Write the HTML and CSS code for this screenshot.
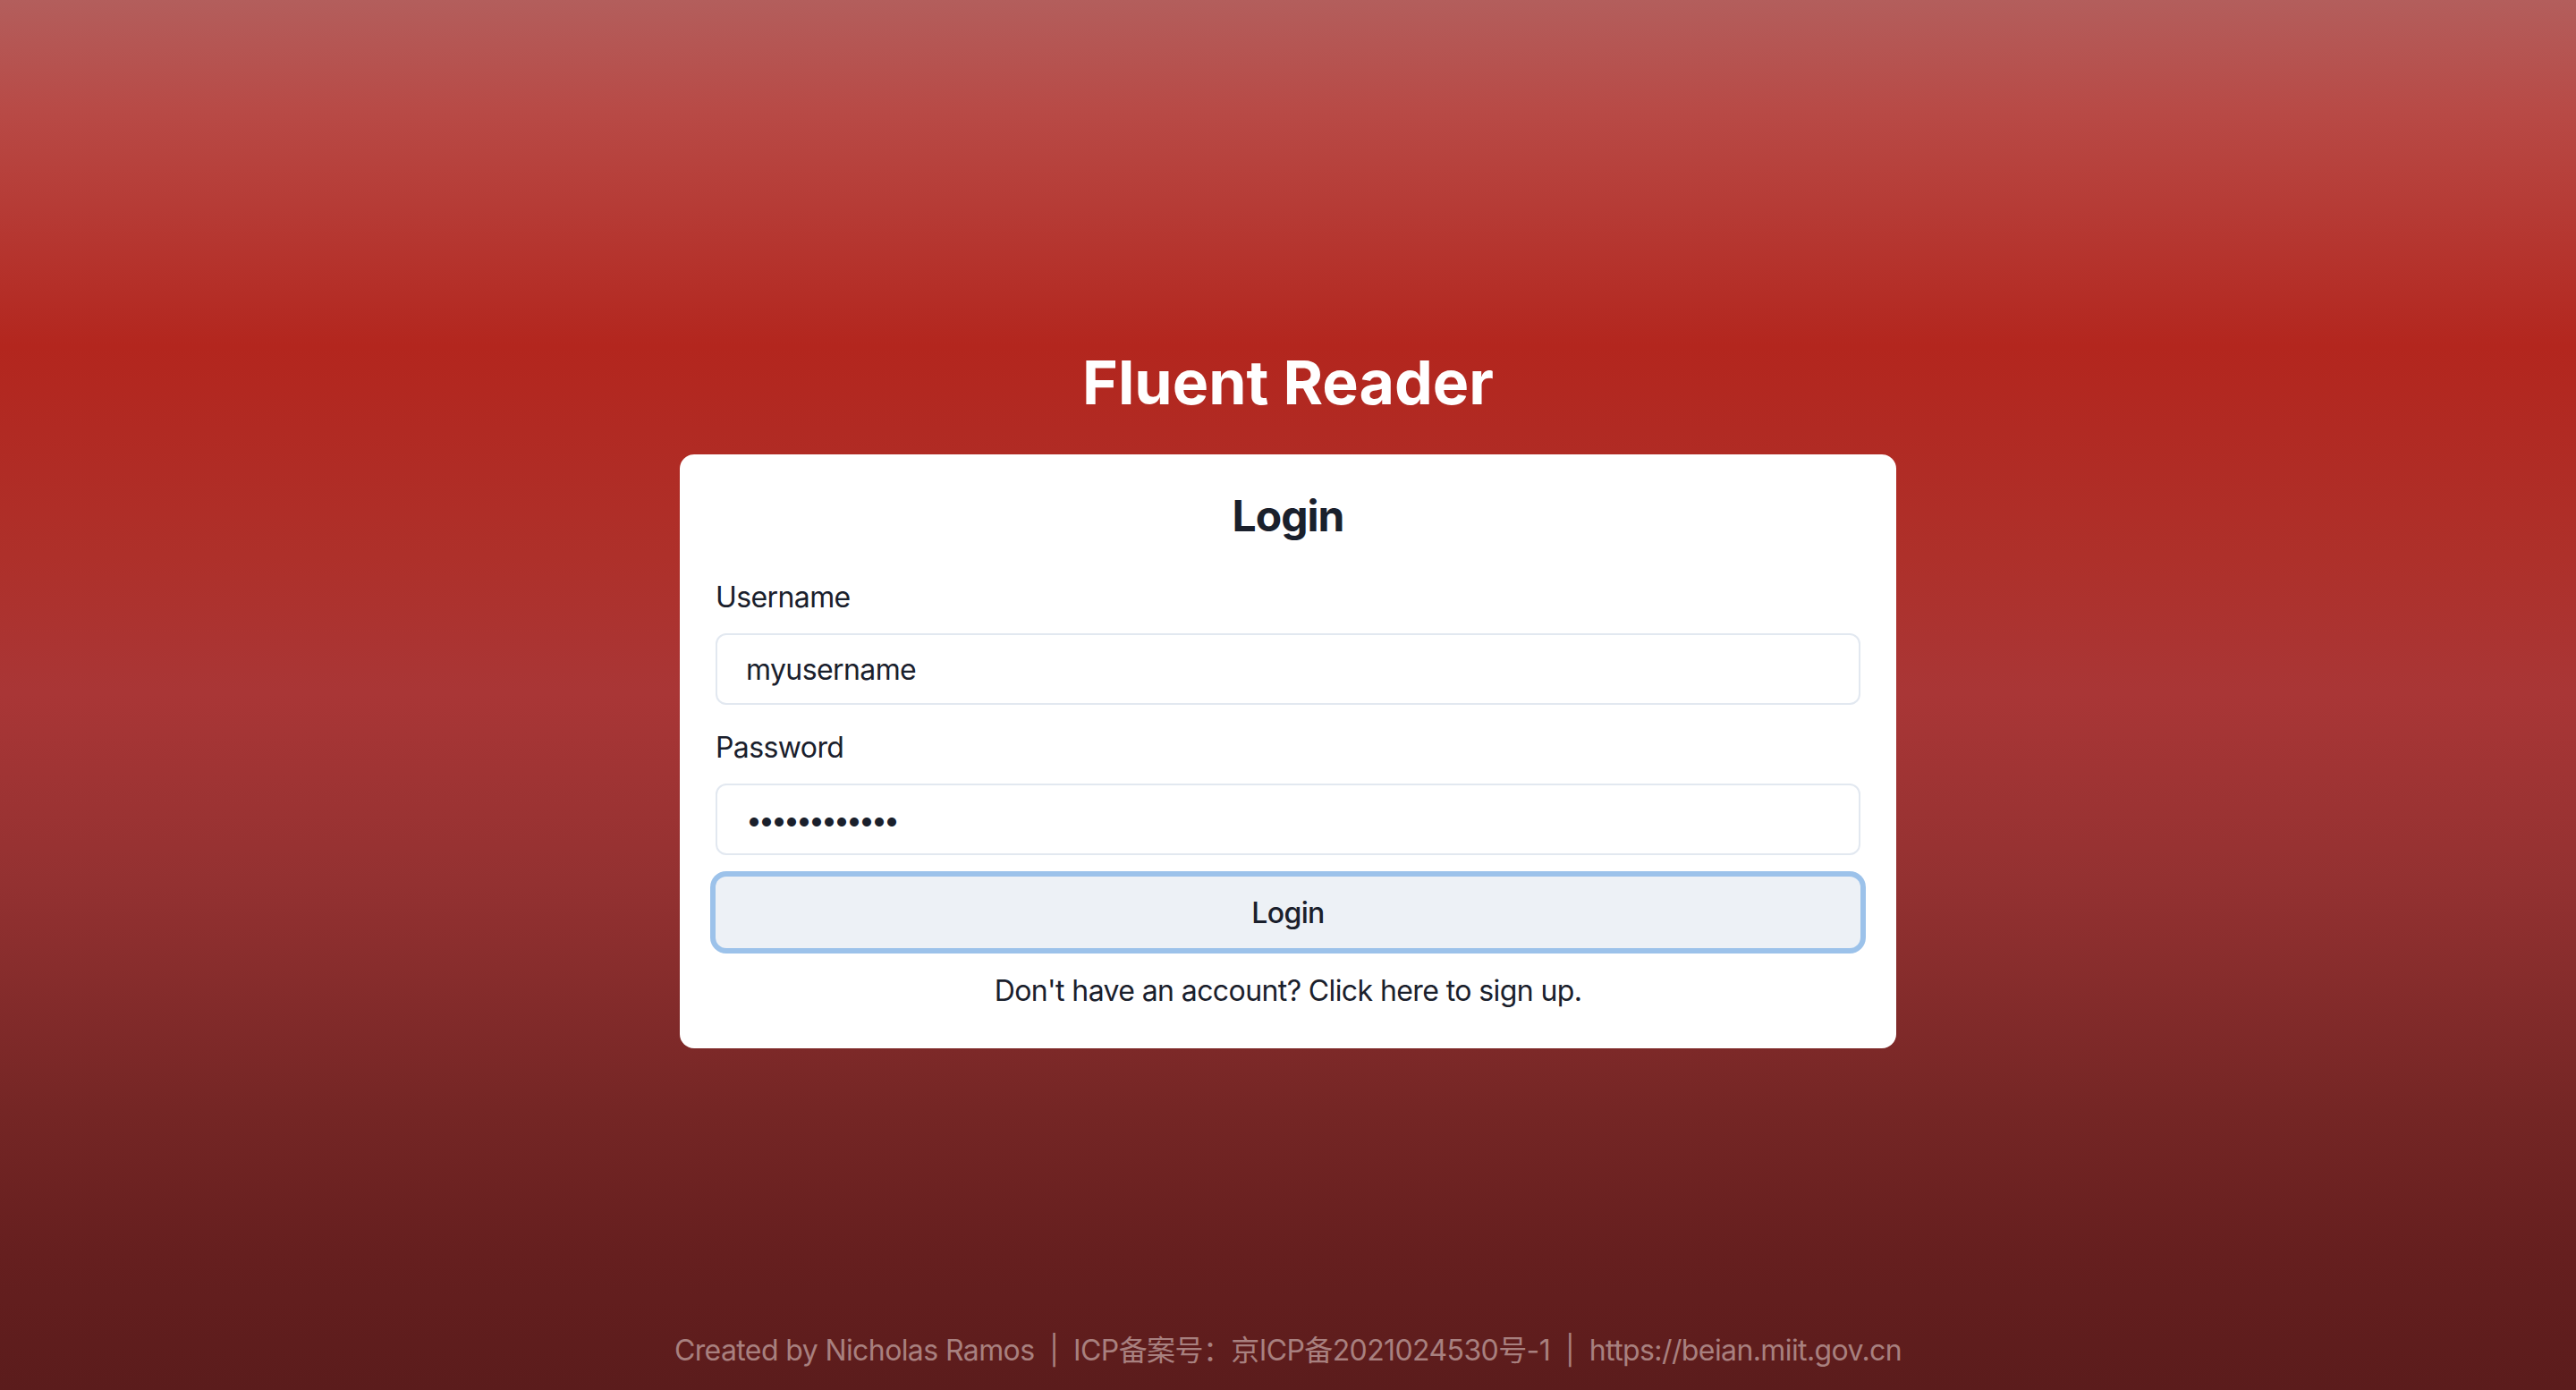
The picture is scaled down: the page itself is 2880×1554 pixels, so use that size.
FILE: index.html
```html
<!DOCTYPE html>
<html lang="en">
<head>
<meta charset="utf-8">
<title>Fluent Reader - Login</title>
<link rel="stylesheet" href="styles.css">
</head>
<body>
<div class="page">
  <main class="main">
    <h1 class="title">Fluent Reader</h1>
    <div class="card">
      <h2 class="card-title">Login</h2>
      <form class="form">
        <label class="label" for="username">Username</label>
        <input class="input" id="username" type="text" value="myusername">
        <label class="label" for="password">Password</label>
        <input class="input input-pass" id="password" type="password" value="mypassword12">
        <button class="btn" type="button">Login</button>
        <p class="signup">Don't have an account? Click here to sign up.</p>
      </form>
    </div>
  </main>
  <footer class="footer">Created by Nicholas Ramos &nbsp;|&nbsp; ICP备案号：京ICP备2021024530号-1 &nbsp;|&nbsp; https://beian.miit.gov.cn</footer>
</div>
</body>
</html>
```

FILE: styles.css
```css
html, body {
  margin: 0;
  padding: 0;
}
body {
  font-family: Inter, "Noto Sans CJK SC", "Noto Sans", sans-serif;
  color: #1a202c;
  background: linear-gradient(to bottom,
    #b35e5c 0px,
    #b84a46 124px,
    #b3261e 387px,
    #ae302a 620px,
    #a93636 775px,
    #933131 990px,
    #752625 1240px,
    #661f1f 1400px,
    #5b1c1c 1554px);
  min-height: 1554px;
}
.page {
  min-height: 1554px;
  display: flex;
  flex-direction: column;
}
.main {
  display: flex;
  flex-direction: column;
  align-items: center;
  padding-top: 393px;
}
.title {
  margin: 0 0 47px;
  font-size: 68px;
  line-height: 68px;
  font-weight: 700;
  color: #ffffff;
}
.card {
  box-sizing: border-box;
  width: 1360px;
  padding: 40px;
  background: #ffffff;
  border-radius: 16px;
}
.card-title {
  margin: 0 0 38px;
  font-size: 48px;
  line-height: 58px;
  font-weight: 700;
  letter-spacing: -1px;
  text-align: center;
  color: #1a202c;
}
.form {
  display: flex;
  flex-direction: column;
}
.label {
  font-size: 32px;
  line-height: 48px;
  letter-spacing: -0.6px;
  margin-bottom: 16px;
  color: #1a202c;
}
.input {
  box-sizing: border-box;
  height: 80px;
  margin: 0 0 24px;
  padding: 0 32px;
  border: 2px solid #e2e8f0;
  border-radius: 12px;
  font-family: Inter, sans-serif;
  font-size: 32px;
  letter-spacing: -0.6px;
  color: #1a202c;
  background: #ffffff;
  outline: none;
}
.input-pass {
  letter-spacing: -4px;
}
.btn {
  box-sizing: border-box;
  height: 80px;
  margin: 0 0 24px;
  border: none;
  border-radius: 12px;
  background: #edf1f6;
  box-shadow: 0 0 0 6px #9cc2ea;
  font-family: Inter, sans-serif;
  font-size: 32px;
  font-weight: 500;
  letter-spacing: -0.6px;
  color: #1a202c;
}
.signup {
  margin: 0;
  font-size: 32px;
  line-height: 48px;
  letter-spacing: -0.6px;
  text-align: center;
  color: #1a202c;
}
.footer {
  margin-top: auto;
  padding-bottom: 20px;
  font-size: 32px;
  line-height: 48px;
  letter-spacing: -0.6px;
  text-align: center;
  color: #a8807f;
}
```
